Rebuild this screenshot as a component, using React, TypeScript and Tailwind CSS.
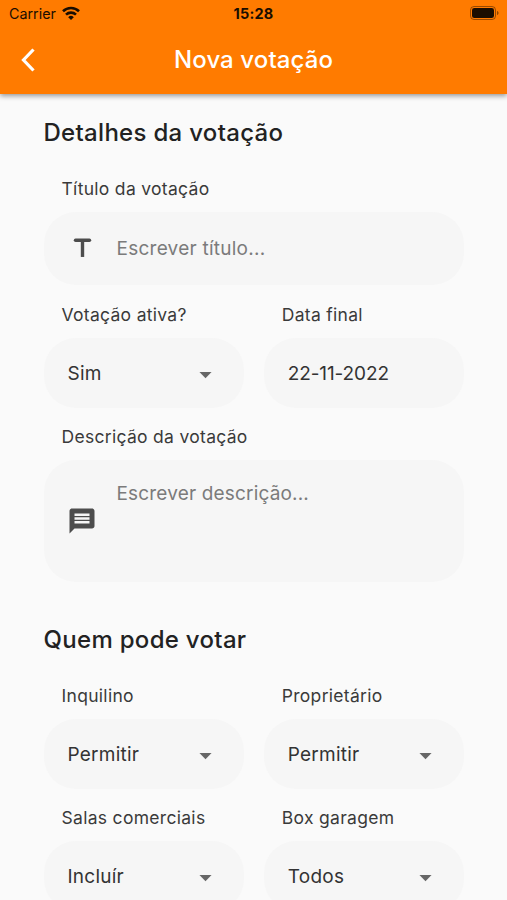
import React, { useState } from 'react';
import { MdArrowDropDown } from 'react-icons/md';

interface FieldProps {
  label: string;
  children: React.ReactNode;
}

const Field: React.FC<FieldProps> = ({ label, children }) => (
  <div className="flex flex-col min-w-0">
    <label className="h-[22px] pl-[18px] text-[17.5px] leading-[21px] tracking-[0.3px] text-[#3a3a3a] whitespace-nowrap">{label}</label>
    <div className="mt-3">{children}</div>
  </div>
);

interface SelectFieldProps {
  label: string;
  options: string[];
}

const SelectField: React.FC<SelectFieldProps> = ({ label, options }) => {
  const [value, setValue] = useState(options[0]);

  return (
    <Field label={label}>
      <div className="relative flex h-[70px] items-center rounded-[32px] bg-[#f6f6f6]">
        <select
          value={value}
          onChange={(e) => setValue(e.target.value)}
          className="h-full w-full appearance-none bg-transparent pt-0.5 pl-6 text-[19px] tracking-[0.25px] text-[#333333] outline-none"
        >
          {options.map(option => (
            <option key={option} value={option}>{option}</option>
          ))}
        </select>
        <MdArrowDropDown className="pointer-events-none absolute right-[24px] size-[29px] translate-y-px text-[#666666]" />
      </div>
    </Field>
  );
};

const TitleIcon: React.FC = () => (
  <svg className="size-[29px] shrink-0 text-[#4d4d4d]" viewBox="0 0 24 24" fill="none" stroke="currentColor" strokeWidth="2.8">
    <path d="M6.2 5.2h11.6" strokeLinecap="round" />
    <path d="M12 5v14" />
  </svg>
);

const MessageIcon: React.FC = () => (
  <svg className="size-[30px] shrink-0 -translate-x-px text-[#4d4d4d]" viewBox="0 0 24 24" fill="none">
    <path d="M4 2h16c1.1 0 2 .9 2 2v12c0 1.1-.9 2-2 2H6l-4 4V4c0-1.1.9-2 2-2z" fill="currentColor" />
    <path d="M6 7h12M6 10h12M6 13h12" stroke="#f6f6f6" strokeWidth="2.1" />
  </svg>
);

const StatusBar: React.FC = () => (
  <div className="grid h-[27px] grid-cols-3 items-center px-[9px] text-[#1a0d00]">
    <div className="flex items-center gap-[6px] text-[14.3px]">
      <span>Carrier</span>
      <svg className="h-[14px] w-[18px] -translate-y-px" viewBox="0 0 18 14" fill="none" stroke="currentColor" strokeWidth="2.6">
        <path d="M1 5.2a11.5 11.5 0 0 1 16 0" />
        <path d="M4 8.6a7.2 7.2 0 0 1 10 0" />
        <path d="M9 14 6.2 11.2a4 4 0 0 1 5.6 0z" fill="currentColor" stroke="none" />
      </svg>
    </div>
    <span className="text-center text-[14.5px] font-bold tracking-[0.2px]">15:28</span>
    <div className="flex items-center justify-end">
      <svg className="h-[14px] w-[29px] translate-x-px -translate-y-px" viewBox="0 0 29 14" fill="none">
        <rect x=".5" y=".5" width="25" height="13" rx="3.5" stroke="currentColor" strokeOpacity=".45" />
        <rect x="2" y="2" width="22" height="10" rx="2.3" fill="currentColor" />
        <path d="M27 5v4c1-.3 1.5-1 1.5-2S28 5.3 27 5z" fill="currentColor" fillOpacity=".5" />
      </svg>
    </div>
  </div>
);

const App: React.FC = () => {
  const [title, setTitle] = useState('');
  const [date, setDate] = useState('22-11-2022');
  const [description, setDescription] = useState('');

  return (
    <div className="h-screen overflow-hidden bg-[#fafafa] font-['Inter',sans-serif]">
      <header className="relative h-[94px] bg-[#ff7b00] shadow-[0_2px_5px_rgba(0,0,0,0.4)]">
        <StatusBar />
        <div className="grid h-[66px] grid-cols-[56px_1fr_56px] items-center">
          <button aria-label="Voltar" className="flex justify-center text-white">
            <svg className="h-[24px] w-[14px]" viewBox="0 0 14 24" fill="none" stroke="currentColor" strokeWidth="3.2">
              <path d="M12.5 1.5 2.5 12l10 10.5" />
            </svg>
          </button>
          <h1 className="pb-px text-center text-[24px] font-medium tracking-[0.1px] text-white">Nova votação</h1>
        </div>
      </header>

      <main className="pr-[43px] pl-[43.5px]">
        <h2 className="pt-[23px] text-[24px] leading-[32px] font-medium tracking-[0.3px] text-[#222222]">Detalhes da votação</h2>
        <div className="mt-[29px] flex flex-col">
          <Field label="Título da votação">
            <div className="flex h-[73px] items-center rounded-[32px] bg-[#f6f6f6] pl-6">
              <TitleIcon />
              <input
                value={title}
                onChange={(e) => setTitle(e.target.value)}
                placeholder="Escrever título..."
                className="ml-5 w-full bg-transparent pt-px text-[19px] tracking-[0.25px] outline-none placeholder:text-[#7b7b7b]"
              />
            </div>
          </Field>
          <div className="mt-[19px] grid grid-cols-2 gap-5">
            <SelectField label="Votação ativa?" options={['Sim', 'Não']} />
            <Field label="Data final">
              <input
                value={date}
                onChange={(e) => setDate(e.target.value)}
                className="h-[70px] w-full rounded-[32px] bg-[#f6f6f6] px-6 text-[19px] tracking-[-0.1px] text-[#333333] outline-none"
              />
            </Field>
          </div>
          <div className="mt-[18px]">
            <Field label="Descrição da votação">
              <div className="flex h-[122px] items-center rounded-[32px] bg-[#f6f6f6] pl-6">
                <MessageIcon />
                <textarea
                  value={description}
                  onChange={(e) => setDescription(e.target.value)}
                  placeholder="Escrever descrição..."
                  className="ml-[19px] h-full w-full resize-none bg-transparent pt-5 text-[19px] tracking-[0.17px] outline-none placeholder:text-[#7b7b7b]"
                />
              </div>
            </Field>
          </div>
        </div>

        <h2 className="mt-[42px] text-[24px] leading-[32px] font-medium tracking-[0.3px] text-[#222222]">Quem pode votar</h2>
        <div className="mt-[29px] grid grid-cols-2 gap-x-5 gap-y-[18px]">
          <SelectField label="Inquilino" options={['Permitir', 'Não permitir']} />
          <SelectField label="Proprietário" options={['Permitir', 'Não permitir']} />
          <SelectField label="Salas comerciais" options={['Incluír', 'Não incluír']} />
          <SelectField label="Box garagem" options={['Todos', 'Nenhum']} />
        </div>
      </main>
    </div>
  );
};

export default App;
